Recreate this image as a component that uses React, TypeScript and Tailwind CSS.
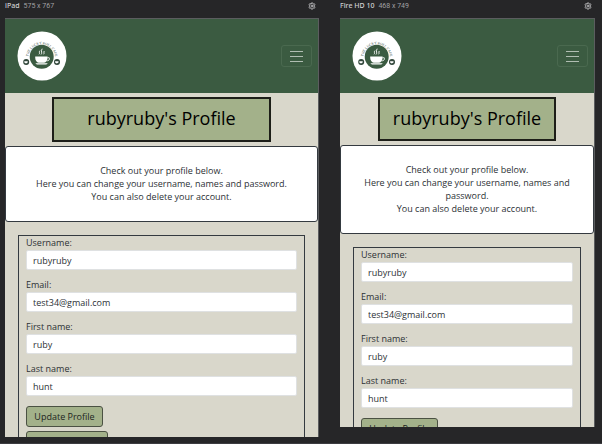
import { Settings } from "lucide-react";

type Device = {
  id: string;
  name: string;
  size: string;
  frame: string;
  title: string;
};

const devices: Device[] = [
  { id: "ipad", name: "iPad", size: "575 x 767", frame: "h-[419px]", title: "h-[45px]" },
  { id: "fire", name: "Fire HD 10", size: "468 x 749", frame: "h-[409px]", title: "h-11" },
];

const fields = [
  { key: "username", label: "Username:", value: "rubyruby", type: "text" },
  { key: "email", label: "Email:", value: "test34@gmail.com", type: "email" },
  { key: "first", label: "First name:", value: "ruby", type: "text" },
  { key: "last", label: "Last name:", value: "hunt", type: "text" },
];

function Logo({ id }: { id: string }) {
  return (
    <svg viewBox="0 0 50 50" className="size-[50px]" role="img" aria-label="The Lucky Roll Cafe">
      <circle cx="25" cy="25" r="24.5" fill="#fff" />
      <circle cx="24.7" cy="25.7" r="12" fill="#3b5b41" />
      <path id={`arc-${id}`} d="M11.2 27.5a13.5 14.3 0 0 1 27 0" fill="none" />
      <text fontSize="3.5" fill="#30463a" fontFamily="Liberation Serif, serif">
        <textPath href={`#arc-${id}`} startOffset="50%" textAnchor="middle">
          THE LUCKY ROLL CAFE
        </textPath>
      </text>
      <g fill="#fff">
        <path d="M18.2 25.4h12.4v1.1c0 3-1.5 4.9-3.5 5.2h-5.4c-2-.3-3.5-2.2-3.5-5.2z" />
        <path d="M18.3 32.3h12.6l-1.6 1.1h-9.4z" />
      </g>
      <path d="M30.5 26.7h1.7c.9 2-.5 3.2-2.6 3.2" fill="none" stroke="#fff" strokeWidth=".8" />
      <path
        d="M22 23.3c1.4-1.3-.6-2 1-3.7M24 23.5c2-1.8-.8-2.7 1.2-5.8M26.5 23.3c1.3-1.2-.3-1.9.8-3.3"
        fill="none"
        stroke="#fff"
        strokeWidth=".9"
      />
      {[9.2, 40].map((x) => (
        <g key={x}>
          <circle cx={x} cy="31" r="3" fill="#30463a" />
          <path d={`M${x - 1.9} 30.2h3.4v1.4q-1.7 1.6-3.4 0z`} fill="#fff" />
        </g>
      ))}
    </svg>
  );
}

function Preview({ device }: { device: Device }) {
  return (
    <section className="min-w-0">
      <header className="flex h-[18px] items-start justify-between pr-[3px] pt-0.5 text-[7px] leading-2">
        <div className="flex gap-1">
          <h2 className="font-['Noto_Sans',sans-serif] font-medium text-[#d0d0d2]">{device.name}</h2>
          <span className="font-[Roboto,sans-serif] text-[#a0a0a3]">{device.size}</span>
        </div>
        <button type="button" aria-label={`${device.name} settings`} className="text-[#b8b8ba]">
          <Settings className="size-2" strokeWidth={3} />
        </button>
      </header>

      <div className={`overflow-hidden border-r border-t border-[#5b5d5f] bg-[#d9d7cb] ${device.frame}`}>
        <nav className="flex h-[74px] items-center justify-between bg-[#3b5b41] pl-3 pr-1.5">
          <a href="#home">
            <Logo id={device.id} />
          </a>
          <button
            type="button"
            aria-label="Toggle navigation"
            className="flex h-[22px] w-[31px] flex-col items-center justify-center gap-1 rounded-[3px] border border-[#4a694f]"
          >
            <span className="h-px w-[13px] bg-[#b0bdb2]" />
            <span className="h-px w-[13px] bg-[#b0bdb2]" />
            <span className="h-px w-[13px] bg-[#b0bdb2]" />
          </button>
        </nav>

        <h1
          className={`mx-auto mb-1 mt-1 flex w-[70%] items-center justify-center whitespace-nowrap border-2 border-[#1d1e18] bg-[#a3b18a] pb-0.5 text-[18px] text-black ${device.title}`}
        >
          rubyruby's Profile
        </h1>

        <div className="rounded-[3px] border border-[#343a40] bg-white px-4 pb-[18px] pt-[17px] text-center">
          <p>Check out your profile below.</p>
          <p>Here you can change your username, names and password.</p>
          <p>You can also delete your account.</p>
        </div>

        <form className="mx-[13px] mt-[13px] border border-[#343a40] px-[7px] pb-2">
          <div className="flex flex-col gap-2">
            {fields.map((f) => (
              <div key={f.key} className="flex flex-col gap-px">
                <label htmlFor={`${device.id}-${f.key}`}>{f.label}</label>
                <input
                  id={`${device.id}-${f.key}`}
                  type={f.type}
                  defaultValue={f.value}
                  className="h-5 w-full rounded-xs border border-[#dfe1e2] bg-white px-1.5"
                />
              </div>
            ))}
          </div>
          <div className="mt-[10px] flex flex-col items-start gap-1">
            <button type="button" className="h-[21px] w-[77px] rounded-[3px] border border-[#4b5143] bg-[#a3b18a] font-medium text-[#20241d]">
              Update Profile
            </button>
            <button
              type="button"
              aria-label="Delete account"
              className="h-[21px] w-[82px] rounded-[3px] border border-[#4b5143] bg-[#a3b18a]"
            />
          </div>
        </form>
      </div>
    </section>
  );
}

export default function App() {
  return (
    <main className="grid min-h-screen grid-cols-[314fr_255fr] gap-[21px] border-b border-[#3c3c40] bg-[#262628] pl-[5px] pr-[7px] font-['Open_Sans',sans-serif] text-[9px] leading-[13px] text-[#2c3135]">
      {devices.map((d) => (
        <Preview key={d.id} device={d} />
      ))}
    </main>
  );
}
